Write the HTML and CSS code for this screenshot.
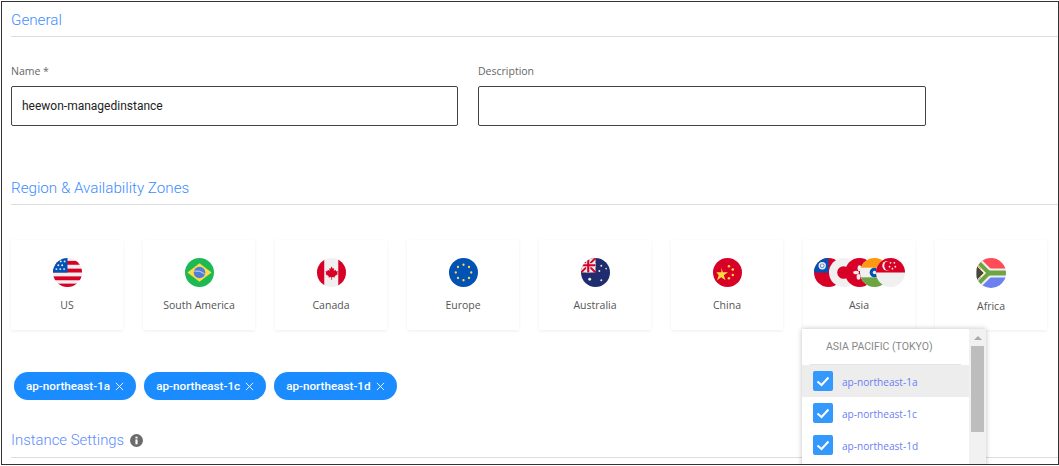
FILE: index.html
```html
<!DOCTYPE html>
<html lang="en">
<head>
<meta charset="utf-8">
<title>Managed Instance</title>
<link rel="stylesheet" href="styles.css">
</head>
<body>
<main class="frame">
  <section class="general">
    <h2 class="heading heading-first">General</h2>
    <div class="fields">
      <div class="field">
        <label class="label">Name *</label>
        <div class="input">heewon-managedinstance</div>
      </div>
      <div class="field field-wide">
        <label class="label">Description</label>
        <div class="input"></div>
      </div>
    </div>
  </section>
  <section class="region">
    <h2 class="heading">Region &amp; Availability Zones</h2>
    <div class="cards">
      <div class="card">
        <svg class="flag" viewBox="0 0 30 30"><rect width="30" height="30" fill="#eee"/><g fill="#d80027"><rect y="3" width="30" height="4"/><rect y="11" width="30" height="4"/><rect y="19" width="30" height="4"/><rect y="26.500" width="30" height="3.500"/></g><rect width="15" height="15" fill="#0052b4"/><g fill="#eee"><circle cx="3.500" cy="11.500" r="1"/><circle cx="7.500" cy="11.500" r="1"/><circle cx="11.500" cy="11.500" r="1"/><circle cx="5.500" cy="7.500" r="1"/><circle cx="9.500" cy="7.500" r="1"/><circle cx="12" cy="3.500" r="1"/><circle cx="8" cy="3.500" r="1"/></g></svg>
        <span class="card-name">US</span>
      </div>
      <div class="card">
        <svg class="flag" viewBox="0 0 30 30"><rect width="30" height="30" fill="#1db954"/><path d="M15 5.500 27.500 15 15 24.500 2.500 15z" fill="#ffda44"/><circle cx="15" cy="15" r="6" fill="#4f7fd9"/><path d="M9.500 13.500q6-1 11 3" fill="none" stroke="#eee" stroke-width=".8"/></svg>
        <span class="card-name">South America</span>
      </div>
      <div class="card">
        <svg class="flag" viewBox="0 0 30 30"><rect width="30" height="30" fill="#f0f0f0"/><rect width="7.500" height="30" fill="#d80027"/><rect x="22" width="8" height="30" fill="#d80027"/><path d="M15 8.500l1.300 2.500 1.400-.7-.4 3 1.900-1.200.5 1.500 2 .2-.8 2.100.8.700-3.500 2.300.4 1.200-3-.4v2.800h-.8v-2.800l-3 .4.400-1.200-3.500-2.300.8-.7-.8-2.100 2-.2.500-1.500 1.900 1.200-.4-3 1.400.7z" fill="#d80027"/></svg>
        <span class="card-name">Canada</span>
      </div>
      <div class="card">
        <svg class="flag" viewBox="0 0 30 30"><rect width="30" height="30" fill="#0052b4"/><g fill="#ffda44"><circle cx="15" cy="7" r="1.200"/><circle cx="15" cy="23" r="1.200"/><circle cx="7" cy="15" r="1.200"/><circle cx="23" cy="15" r="1.200"/><circle cx="9.300" cy="9.300" r="1.200"/><circle cx="20.700" cy="9.300" r="1.200"/><circle cx="9.300" cy="20.700" r="1.200"/><circle cx="20.700" cy="20.700" r="1.200"/></g></svg>
        <span class="card-name">Europe</span>
      </div>
      <div class="card">
        <svg class="flag" viewBox="0 0 30 30"><rect width="30" height="30" fill="#1f2d6e"/><rect width="15" height="15" fill="#eee"/><path d="M0 0 15 15M15 0 0 15" stroke="#d80027" stroke-width="2"/><path d="M7.500 0V15M0 7.500H15" stroke="#eee" stroke-width="4"/><path d="M7.500 0V15M0 7.500H15" stroke="#d80027" stroke-width="2.200"/><g fill="#eee"><circle cx="9" cy="22" r="1.500"/><circle cx="21" cy="8" r="1"/><circle cx="26" cy="11" r=".8"/><circle cx="19" cy="13.500" r="1"/><circle cx="21" cy="23" r="1"/></g></svg>
        <span class="card-name">Australia</span>
      </div>
      <div class="card">
        <svg class="flag" viewBox="0 0 30 30"><rect width="30" height="30" fill="#d80027"/><g fill="#ffda44"><path d="M8.500 9.500l1.700 5h5.300l-4.300 3.100 1.700 5.100-4.400-3.100-4.300 3.100 1.700-5.100L3.500 14.500h5.300z" transform="translate(0 .200)"/><circle cx="16.500" cy="8.500" r="1.300"/><circle cx="20.500" cy="12" r="1.300"/><circle cx="20.500" cy="17.500" r="1.300"/><circle cx="16.500" cy="21" r="1.300"/></g></svg>
        <span class="card-name">China</span>
      </div>
      <div class="card">
        <div class="flag-stack">
          <svg class="flag" viewBox="0 0 30 30"><rect width="30" height="30" fill="#d80027"/><rect width="15" height="15" fill="#0052b4"/><circle cx="8.500" cy="8" r="3.800" fill="#eee"/><circle cx="8.500" cy="8" r="2.400" fill="#5b86cc"/><circle cx="8.500" cy="8" r="1.500" fill="#eee"/></svg>
          <svg class="flag" viewBox="0 0 30 30"><rect width="30" height="30" fill="#f0f0f0"/><circle cx="15" cy="15" r="6.500" fill="#d80027"/></svg>
          <svg class="flag" viewBox="0 0 30 30"><rect width="30" height="30" fill="#d80027"/><g fill="#eee"><ellipse cx="15" cy="10.500" rx="2" ry="3"/><ellipse cx="11.500" cy="15" rx="3" ry="1.800"/><ellipse cx="14" cy="19.500" rx="2" ry="3"/></g></svg>
          <svg class="flag" viewBox="0 0 30 30"><rect width="30" height="30" fill="#f0f0f0"/><rect width="30" height="10" fill="#ff9811"/><rect y="20" width="30" height="10" fill="#6da544"/><circle cx="15" cy="15" r="5" fill="#0052b4"/><circle cx="15" cy="15" r="1.800" fill="#f0f0f0"/></svg>
          <svg class="flag" viewBox="0 0 30 30"><rect width="30" height="30" fill="#f0f0f0"/><rect width="30" height="15" fill="#d80027"/><circle cx="11.500" cy="8" r="5" fill="#f0f0f0"/><circle cx="13.500" cy="8" r="5" fill="#d80027"/><g fill="#f0f0f0"><circle cx="15" cy="5" r=".9"/><circle cx="19" cy="5" r=".9"/><circle cx="14" cy="9" r=".9"/><circle cx="20" cy="9" r=".9"/><circle cx="17" cy="11" r=".9"/></g></svg>
        </div>
        <span class="card-name">Asia</span>
      </div>
      <div class="card card-africa">
        <svg class="flag flag-large" viewBox="0 0 30 30"><rect width="30" height="30" fill="#fff"/><rect width="30" height="11" fill="#ff4b55"/><rect y="19" width="30" height="11" fill="#6d80f0"/><path d="M2 3 14 15 2 27" fill="none" stroke="#eee" stroke-width="7"/><path d="M14 15H30" stroke="#eee" stroke-width="9"/><path d="M3 5 13 15 3 25" fill="none" stroke="#6da544" stroke-width="4"/><path d="M13 15H30" stroke="#6da544" stroke-width="5"/><path d="M0 7 8 15 0 23z" fill="#404753" stroke="#ffda44" stroke-width="1"/></svg>
        <span class="card-name">Africa</span>
      </div>
    </div>
    <div class="chips">
      <span class="chip">ap-northeast-1a<svg class="chip-x" viewBox="0 0 10 10"><path d="M1 1 9 9M9 1 1 9"/></svg></span>
      <span class="chip">ap-northeast-1c<svg class="chip-x" viewBox="0 0 10 10"><path d="M1 1 9 9M9 1 1 9"/></svg></span>
      <span class="chip">ap-northeast-1d<svg class="chip-x" viewBox="0 0 10 10"><path d="M1 1 9 9M9 1 1 9"/></svg></span>
    </div>
  </section>
  <section class="instance">
    <h2 class="heading heading-info">Instance Settings<svg class="info" viewBox="0 0 12 12"><circle cx="6" cy="6" r="6" fill="#6b6b6b"/><rect x="5" y="5" width="2" height="4.500" fill="#fff"/><rect x="5" y="2.500" width="2" height="1.600" fill="#fff"/></svg></h2>
  </section>
  <div class="dropdown">
    <div class="dropdown-list">
      <div class="dropdown-title">ASIA PACIFIC (TOKYO)</div>
      <div class="option option-active"><svg class="check" viewBox="0 0 20 20"><rect width="20" height="20" rx="2" fill="#3399ff"/><path d="M4.500 10.500 8.500 14 15.500 6.500" fill="none" stroke="#fff" stroke-width="2"/></svg><span class="option-text">ap-northeast-1a</span></div>
      <div class="option"><svg class="check" viewBox="0 0 20 20"><rect width="20" height="20" rx="2" fill="#3399ff"/><path d="M4.500 10.500 8.500 14 15.500 6.500" fill="none" stroke="#fff" stroke-width="2"/></svg><span class="option-text">ap-northeast-1c</span></div>
      <div class="option"><svg class="check" viewBox="0 0 20 20"><rect width="20" height="20" rx="2" fill="#3399ff"/><path d="M4.500 10.500 8.500 14 15.500 6.500" fill="none" stroke="#fff" stroke-width="2"/></svg><span class="option-text">ap-northeast-1d</span></div>
    </div>
    <div class="scrollbar">
      <span class="scroll-arrow"></span>
      <span class="scroll-thumb"></span>
    </div>
  </div>
</main>
</body>
</html>
```
FILE: styles.css
```css
* { box-sizing: border-box; }
html, body { margin: 0; padding: 0; background: #fff; }
.frame {
  position: relative;
  width: 1058px;
  height: 464px;
  margin: 1px 0 0 1px;
  border: 1px solid #333;
  overflow: hidden;
  padding: 0 0 0 9px;
  font-family: "Open Sans", sans-serif;
}
.heading {
  margin: 0;
  height: 36px;
  padding-top: 9px;
  border-bottom: 1px solid #ddd;
  font-family: Roboto, sans-serif;
  font-size: 15.200px;
  line-height: 20px;
  font-weight: 300;
  color: #3d8bff;
}
.heading-first { height: 35px; padding-top: 8px; }
.general { height: 167px; }
.fields { display: flex; gap: 20px; padding-top: 27px; }
.field { width: 447px; }
.field-wide { width: 448px; }
.label { display: block; font-size: 10.500px; line-height: 14px; color: #666; margin-bottom: 8px; }
.input {
  height: 40px;
  border: 1px solid #444;
  border-radius: 2px;
  padding: 0 10px;
  font-family: Roboto, sans-serif;
  font-size: 12px;
  line-height: 38px;
  color: #222;
}
.cards { display: flex; gap: 20px; padding-top: 35px; }
.card {
  width: 112px;
  height: 90px;
  flex: none;
  display: flex;
  flex-direction: column;
  align-items: center;
  padding-top: 18px;
  background: #fff;
  box-shadow: 0 1px 3px rgba(0, 0, 0, .07);
}
.flag { display: block; flex: none; width: 29px; height: 29px; border-radius: 50%; }
.flag-large { width: 30px; height: 30px; }
.flag-stack { display: flex; justify-content: center; }
.flag-stack .flag + .flag { margin-left: -13.500px; }
.card-name { margin-top: 10px; font-size: 10.500px; line-height: 16px; color: #555; }
.chips { display: flex; gap: 8px; padding: 42px 0 0 3px; }
.chip {
  display: flex;
  align-items: center;
  height: 28px;
  padding: 0 12px;
  border-radius: 14px;
  background: #1a8cff;
  color: #fff;
  font-family: Roboto, sans-serif;
  font-size: 11.700px;
  font-weight: 500;
}
.chip-x { width: 9px; height: 9px; margin-left: 5px; fill: none; stroke: #fff; stroke-width: 1; }
.instance { padding-top: 28px; }
.heading-info { height: 30px; padding-top: 2px; color: #5c8cff; font-size: 14.900px; }
.info { width: 13px; height: 13px; margin-left: 6px; vertical-align: -2px; }
.dropdown {
  position: absolute;
  left: 800px;
  top: 327px;
  width: 184px;
  height: 140px;
  display: flex;
  background: #fff;
  box-shadow: 0 0 5px rgba(0, 0, 0, .25);
}
.dropdown-list { width: 167px; flex: none; }
.dropdown-title {
  height: 36px;
  margin: 0 8px;
  padding: 9px 0 0 16px;
  border-bottom: 1px solid #e4e4e4;
  font-family: Roboto, sans-serif;
  font-size: 10.500px;
  line-height: 18px;
  color: #888;
}
.option {
  display: flex;
  align-items: center;
  gap: 9px;
  height: 32px;
  padding-left: 11px;
  font-size: 10.100px;
  color: #6b7ff0;
}
.option-text { margin-top: 2px; }
.option-active { background: #ededed; }
.check { width: 20px; height: 20px; flex: none; }
.scrollbar { width: 17px; background: #f1f1f1; display: flex; flex-direction: column; align-items: center; padding-top: 7px; }
.scroll-arrow { width: 0; height: 0; border: 4px solid transparent; border-top: 0; border-bottom: 4px solid #aaa; }
.scroll-thumb { width: 13px; height: 86px; margin-top: 6px; background: #bdbdbd; }
```
